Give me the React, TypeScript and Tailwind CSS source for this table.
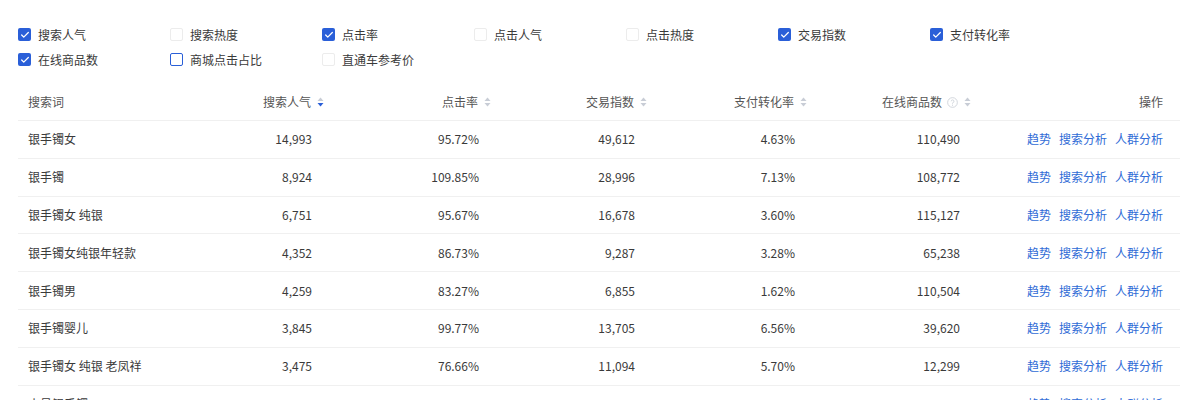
import { Check } from 'lucide-react'

const FONT = { fontFamily: '"Noto Sans CJK SC", "Liberation Sans", sans-serif' }

const filters = [
  { label: '搜索人气', checked: true },
  { label: '搜索热度', checked: false },
  { label: '点击率', checked: true },
  { label: '点击人气', checked: false },
  { label: '点击热度', checked: false },
  { label: '交易指数', checked: true },
  { label: '支付转化率', checked: true },
  { label: '在线商品数', checked: true },
  { label: '商城点击占比', checked: false, focus: true },
  { label: '直通车参考价', checked: false },
]

interface Row {
  word: string
  pop: string
  ctr: string
  trade: string
  conv: string
  items: string
}

const rows: Row[] = [
  { word: '银手镯女', pop: '14,993', ctr: '95.72%', trade: '49,612', conv: '4.63%', items: '110,490' },
  { word: '银手镯', pop: '8,924', ctr: '109.85%', trade: '28,996', conv: '7.13%', items: '108,772' },
  { word: '银手镯女 纯银', pop: '6,751', ctr: '95.67%', trade: '16,678', conv: '3.60%', items: '115,127' },
  { word: '银手镯女纯银年轻款', pop: '4,352', ctr: '86.73%', trade: '9,287', conv: '3.28%', items: '65,238' },
  { word: '银手镯男', pop: '4,259', ctr: '83.27%', trade: '6,855', conv: '1.62%', items: '110,504' },
  { word: '银手镯婴儿', pop: '3,845', ctr: '99.77%', trade: '13,705', conv: '6.56%', items: '39,620' },
  { word: '银手镯女 纯银 老凤祥', pop: '3,475', ctr: '76.66%', trade: '11,094', conv: '5.70%', items: '12,299' },
  { word: '小号银手镯', pop: '3,391', ctr: '85.96%', trade: '12,156', conv: '14.28%', items: '15,444' },
]

function Box({ checked, focus }: { checked: boolean; focus?: boolean }) {
  if (checked) {
    return (
      <span className="w-[13px] h-[13px] rounded-[2px] bg-[#2a5fd8] flex items-center justify-center shrink-0">
        <Check className="w-[10px] h-[10px] text-white" strokeWidth={3} />
      </span>
    )
  }
  return (
    <span
      className={
        focus
          ? 'w-[13px] h-[13px] rounded-[2px] border border-[#2a5fd8] bg-white shrink-0'
          : 'w-[13px] h-[13px] rounded-[2px] border border-[#ececec] bg-white shrink-0'
      }
    />
  )
}

function Sorter({ active }: { active?: boolean }) {
  return (
    <svg width="7" height="10" viewBox="0 0 7 10" className="ml-[6px] shrink-0">
      <path d="M3.5 0.5 L6.5 4 L0.5 4 Z" fill="#c8cdd6" />
      <path d="M0.5 6 L6.5 6 L3.5 9.5 Z" fill={active ? '#2a5fd8' : '#c8cdd6'} />
    </svg>
  )
}

function Help() {
  return (
    <svg width="11" height="11" viewBox="0 0 12 12" className="ml-[5px] shrink-0">
      <circle cx="6" cy="6" r="5.3" fill="none" stroke="#cfd3da" strokeWidth="1" />
      <path d="M4.6 4.7 A1.5 1.5 0 1 1 6.3 6.2 L6 6.5 L6 7.3" fill="none" stroke="#cfd3da" strokeWidth="1" />
      <circle cx="6" cy="8.9" r="0.6" fill="#cfd3da" />
    </svg>
  )
}

const cols = 'grid grid-cols-[162px_154px_167px_156px_160px_165px_198px]'

export default function App() {
  return (
    <div className="w-[1184px] h-[400px] bg-white overflow-hidden text-[12px]" style={FONT}>
      {/* Filters */}
      <div className="pt-[22px] pl-[18px] grid grid-cols-[152px_152px_152px_152px_152px_152px_152px]">
        {filters.map((f) => (
          <label key={f.label} className="h-[25px] flex items-center text-[#3a3a3a]">
            <Box checked={f.checked} focus={f.focus} />
            <span className="ml-[7px]">{f.label}</span>
          </label>
        ))}
      </div>

      {/* Table */}
      <div className="ml-[18px] mr-[4px] mt-[12px]">
        <div className={`${cols} h-[37px] items-center border-b border-[#f0f0f0] text-[#555]`}>
          <div className="pl-[10px]">搜索词</div>
          <div className="flex items-center justify-end pr-[10px]">
            搜索人气
            <Sorter active />
          </div>
          <div className="flex items-center justify-end pr-[10px]">
            点击率
            <Sorter />
          </div>
          <div className="flex items-center justify-end pr-[10px]">
            交易指数
            <Sorter />
          </div>
          <div className="flex items-center justify-end pr-[10px]">
            支付转化率
            <Sorter />
          </div>
          <div className="flex items-center justify-end pr-[11px]">
            在线商品数
            <Help />
            <Sorter />
          </div>
          <div className="text-right pr-[17px]">操作</div>
        </div>

        {rows.map((r) => (
          <div key={r.word} className={`${cols} h-[37.8px] items-center border-b border-[#f0f0f0] text-[#3a3a3a]`}>
            <div className="pl-[10px]">{r.word}</div>
            <div className="text-right pr-[22px]">{r.pop}</div>
            <div className="text-right pr-[22px]">{r.ctr}</div>
            <div className="text-right pr-[22px]">{r.trade}</div>
            <div className="text-right pr-[22px]">{r.conv}</div>
            <div className="text-right pr-[22px]">{r.items}</div>
            <div className="flex justify-end gap-[8px] pr-[17px] text-[#2f6bd6]">
              <span>趋势</span>
              <span>搜索分析</span>
              <span>人群分析</span>
            </div>
          </div>
        ))}
      </div>
    </div>
  )
}
